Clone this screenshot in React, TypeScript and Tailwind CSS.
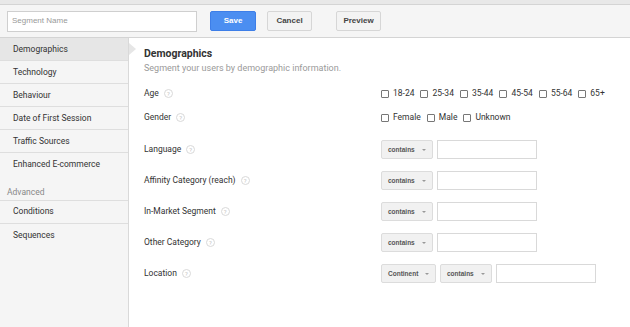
const menu = ['Demographics', 'Technology', 'Behaviour', 'Date of First Session', 'Traffic Sources', 'Enhanced E-commerce'];
const advanced = ['Conditions', 'Sequences'];
const ages = ['18-24', '25-34', '35-44', '45-54', '55-64', '65+'];
const genders = ['Female', 'Male', 'Unknown'];

function Help() {
  return (
    <span className="ml-[5px] inline-flex h-[9px] w-[9px] items-center justify-center rounded-full border border-[#d9d9d9] text-[6px] leading-none text-[#c4c4c4]">
      ?
    </span>
  );
}

function Check({ label }: { label: string }) {
  return (
    <label className="mr-[2px] flex shrink-0 items-center whitespace-nowrap">
      <span className="mr-[4px] inline-block h-[8px] w-[8px] rounded-[1px] border border-[#777] bg-white" />
      <span>{label}</span>
    </label>
  );
}

function Drop({ text, w = 'w-[52px]' }: { text: string; w?: string }) {
  return (
    <div className={`flex h-[19px] ${w} shrink-0 items-center justify-between rounded-[2px] border border-[#dcdcdc] bg-[#f1f1f1] pl-[6px] pr-[6px] font-['Liberation_Sans',sans-serif] text-[6.5px] font-bold text-[#555]`}>
      <span>{text}</span>
      <span className="h-0 w-0 border-x-[2.5px] border-t-[2.5px] border-x-transparent border-t-[#999]" />
    </div>
  );
}

function Field({ w = 'w-[100px]' }: { w?: string }) {
  return <div className={`h-[19px] ${w} shrink-0 border border-[#d9d9d9] bg-white`} />;
}

function Row({ label, children, h = 'h-[31px]' }: { label: string; children: React.ReactNode; h?: string }) {
  return (
    <div className={`flex ${h} items-center`}>
      <div className="flex w-[237px] shrink-0 items-center">
        {label}
        <Help />
      </div>
      <div className="flex items-center gap-[4px]">{children}</div>
    </div>
  );
}

export default function App() {
  return (
    <div className="h-[327px] w-[630px] overflow-hidden bg-white font-['Roboto',sans-serif] text-[8.5px] text-[#333]">
      <div className="h-[4px] bg-[#e8e8e8]" />
      <div className="flex h-[34px] items-center border-y border-[#d4d4d4] bg-[#f5f5f5] pl-[7px]">
        <div className="flex h-[21px] w-[190px] items-center border border-[#cfcfcf] bg-white pl-[4px] font-['Liberation_Sans',sans-serif] text-[8px] text-[#999]">
          Segment Name
        </div>
        <button className="ml-[13px] h-[20px] w-[46px] rounded-[2px] border border-[#3d7ee8] bg-[#4b8ef1] font-['Liberation_Sans',sans-serif] text-[8px] font-bold text-white">
          Save
        </button>
        <button className="ml-[11px] h-[20px] w-[45px] rounded-[2px] border border-[#d6d6d6] bg-[#f3f3f3] font-['Liberation_Sans',sans-serif] text-[8px] font-bold text-[#444]">
          Cancel
        </button>
        <button className="ml-[24px] h-[20px] w-[45px] rounded-[2px] border border-[#d6d6d6] bg-[#f3f3f3] font-['Liberation_Sans',sans-serif] text-[8px] font-bold text-[#444]">
          Preview
        </button>
      </div>
      <div className="flex h-[289px]">
        <div className="w-[129px] shrink-0 border-r border-[#d9d9d9] bg-[#f5f5f5]">
          {menu.map((m, i) => (
            <div
              key={m}
              className={`relative flex h-[23px] items-center pl-[13px] ${i < menu.length - 1 ? 'border-b border-[#dedede]' : ''} ${i === 0 ? 'bg-[#e6e6e6]' : ''}`}
            >
              {m}
              {i === 0 && (
                <span className="absolute right-[-8px] top-[5px] h-0 w-0 border-y-[6px] border-l-[7px] border-y-transparent border-l-[#e6e6e6]" />
              )}
            </div>
          ))}
          <div className="mt-[10px] border-b border-[#dedede] pb-[1px] pl-[7px] text-[#888]">Advanced</div>
          {advanced.map((m, i) => (
            <div key={m} className={`flex h-[23px] items-center pl-[13px] ${i === 0 ? 'border-b border-[#dedede]' : ''}`}>
              {m}
            </div>
          ))}
        </div>
        <div className="flex-1 pl-[15px] pt-[9px]">
          <div className="text-[10.5px] font-bold leading-[14px]">Demographics</div>
          <div className="text-[9px] leading-[14px] text-[#9a9a9a]">Segment your users by demographic information.</div>
          <div className="mt-[6px]">
            <Row label="Age" h="h-[25px]">
              {ages.map((a) => (
                <Check key={a} label={a} />
              ))}
            </Row>
            <Row label="Gender" h="h-[23px]">
              {genders.map((g) => (
                <Check key={g} label={g} />
              ))}
            </Row>
            <div className="h-[5px]" />
            <Row label="Language">
              <Drop text="contains" />
              <Field />
            </Row>
            <Row label="Affinity Category (reach)">
              <Drop text="contains" />
              <Field />
            </Row>
            <Row label="In-Market Segment">
              <Drop text="contains" />
              <Field />
            </Row>
            <Row label="Other Category">
              <Drop text="contains" />
              <Field />
            </Row>
            <Row label="Location">
              <Drop text="Continent" w="w-[55px]" />
              <Drop text="contains" />
              <Field />
            </Row>
          </div>
        </div>
      </div>
    </div>
  );
}
